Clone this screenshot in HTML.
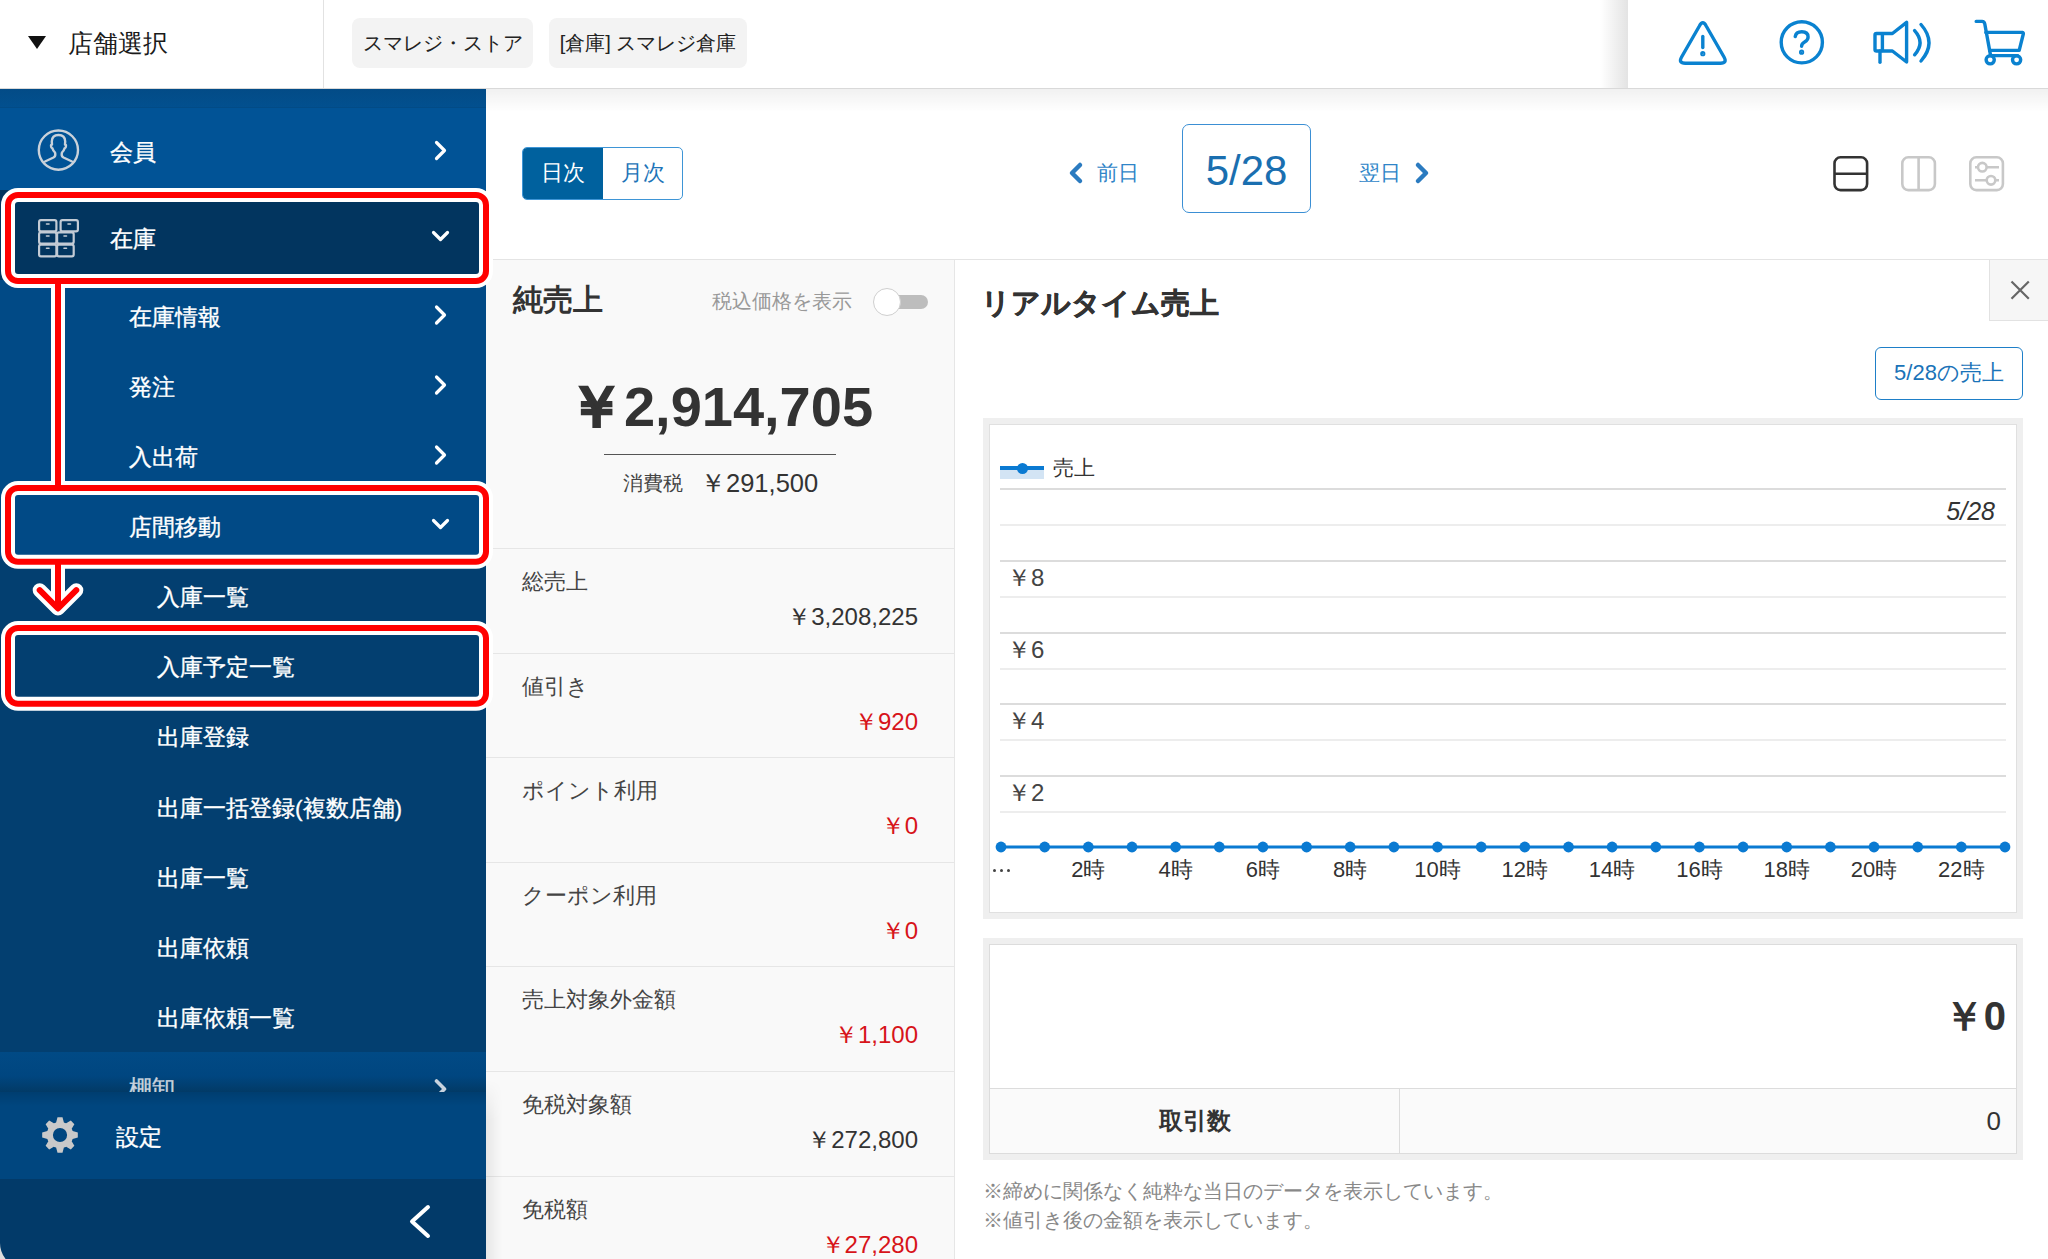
<!DOCTYPE html>
<html lang="ja">
<head>
<meta charset="utf-8">
<style>
*{box-sizing:border-box;margin:0;padding:0}
html,body{width:2048px;height:1259px;overflow:hidden;background:#fff}
body{position:relative;font-family:"Liberation Sans",sans-serif;color:#333}
.a{position:absolute;white-space:nowrap}
/* header */
#hdr{position:absolute;left:0;top:0;width:2048px;height:89px;background:#fff;border-bottom:1px solid #d9d9d9;z-index:5}
.chip{position:absolute;top:18px;height:50px;background:#f3f3f3;border-radius:8px;font-size:20px;line-height:50px;color:#222;white-space:nowrap;text-align:center}
/* sidebar */
#side{position:absolute;left:0;top:88px;width:486px;height:1171px;background:#03406f;overflow:hidden}
.srow{position:absolute;left:0;width:486px;color:#fff;font-size:22px}
.stxt{position:absolute;top:0;line-height:70px}
/* main */
#main{position:absolute;left:486px;top:88px;width:1562px;height:1171px;background:#fff}
</style>
</head>
<body>
<div id="hdr">
  <div class="a" style="left:28px;top:36px;width:0;height:0;border-left:9px solid transparent;border-right:9px solid transparent;border-top:13px solid #111"></div>
  <div class="a" style="left:68px;top:24px;font-size:25.2px;line-height:38px;color:#1a1a1a">店舗選択</div>
  <div class="a" style="left:323px;top:0;width:1px;height:88px;background:#e2e2e2"></div>
  <div class="chip" style="left:352px;width:181px">スマレジ・ストア</div>
  <div class="chip" style="left:549px;width:198px">[倉庫] スマレジ倉庫</div>

  <div class="a" style="left:1600px;top:0;width:28px;height:88px;background:linear-gradient(90deg,rgba(0,0,0,0),rgba(0,0,0,0.11))"></div>
  <svg class="a" style="left:1660px;top:0" width="388" height="88" viewBox="1660 0 388 88" fill="none" stroke="#0a82d0" stroke-width="3.4" stroke-linecap="round" stroke-linejoin="round">
    <path d="M1699.4 26 Q1702.8 19.6 1706.2 26 L1724 57 Q1727.5 63.2 1720.4 63.2 L1685.2 63.2 Q1678.1 63.2 1681.6 57 Z"/>
    <path d="M1702.8 36.5 V47.5"/>
    <circle cx="1702.8" cy="53.7" r="0.9" fill="#0a82d0"/>
    <circle cx="1801.8" cy="42.3" r="20.6"/>
    <path d="M1795.2 36.6 Q1796 31.8 1801.8 31.8 Q1808.1 31.8 1808.1 37 Q1808.1 40 1804.6 42 Q1801.6 43.8 1801.6 46.3"/>
    <circle cx="1801.6" cy="52.2" r="0.9" fill="#0a82d0"/>
    <path d="M1876.5 33.5 H1892.4 L1906.6 22.4 V62 L1892.4 51 H1876.5 Q1875 51 1875 49.5 V35 Q1875 33.5 1876.5 33.5 Z"/>
    <path d="M1882.4 34 V50.6"/>
    <path d="M1880 51 V62.3"/>
    <path d="M1914.6 30.6 Q1925.5 42.6 1914.6 54.8"/>
    <path d="M1921 24.5 Q1937 42.7 1921 61"/>
    <path d="M1976.2 21.4 H1982 Q1984.3 21.5 1984.8 24 L1990.6 55.6 H2017.6"/>
    <path d="M1985.8 32.4 H2022.5 Q2023.6 32.6 2023.3 34 L2019.2 50.4 H1989.6"/>
    <circle cx="1990.2" cy="59.8" r="4.1"/>
    <circle cx="2016.6" cy="59.8" r="4.1"/>
  </svg>
</div>

<div id="side">
  <div class="a" style="left:0;top:0;width:486px;height:20px;background:linear-gradient(#034b86,#02508f)"></div>
  <div class="a" style="left:0;top:19px;width:486px;height:1px;background:#024b86"></div>
  <div class="srow" style="top:20px;height:82px;background:#015396"></div>
  <div class="srow" style="top:102px;height:94px;background:#02355f"></div>
  <div class="srow" style="top:192px;height:280px;background:#014a86"></div>
  <div class="srow" style="top:472px;height:492px;background:#033f70"></div>
  <div class="srow" style="top:964px;height:40px;background:linear-gradient(#014a85 0%,#004680 60%,#023a66 100%)"></div>
  <div class="srow" style="top:1004px;height:87px;background:#00467f"></div>
  <div class="srow" style="top:1091px;height:80px;background:#023a69"></div>
  <div class="a" style="left:110px;top:43.5px;height:40px;line-height:40px;font-size:22.7px;color:#fff;-webkit-text-stroke:0.35px #fff;">会員</div>
  <div class="a" style="left:110px;top:130.5px;height:40px;line-height:40px;font-size:22.7px;color:#fff;-webkit-text-stroke:0.35px #fff;">在庫</div>
  <div class="a" style="left:129px;top:208.5px;height:40px;line-height:40px;font-size:22.7px;color:#fff;-webkit-text-stroke:0.35px #fff;">在庫情報</div>
  <div class="a" style="left:129px;top:278.5px;height:40px;line-height:40px;font-size:22.7px;color:#fff;-webkit-text-stroke:0.35px #fff;">発注</div>
  <div class="a" style="left:129px;top:348.5px;height:40px;line-height:40px;font-size:22.7px;color:#fff;-webkit-text-stroke:0.35px #fff;">入出荷</div>
  <div class="a" style="left:129px;top:418.5px;height:40px;line-height:40px;font-size:22.7px;color:#fff;-webkit-text-stroke:0.35px #fff;">店間移動</div>
  <div class="a" style="left:157px;top:488.5px;height:40px;line-height:40px;font-size:22.7px;color:#fff;-webkit-text-stroke:0.35px #fff;">入庫一覧</div>
  <div class="a" style="left:157px;top:558.5px;height:40px;line-height:40px;font-size:22.7px;color:#fff;-webkit-text-stroke:0.35px #fff;">入庫予定一覧</div>
  <div class="a" style="left:157px;top:628.5px;height:40px;line-height:40px;font-size:22.7px;color:#fff;-webkit-text-stroke:0.35px #fff;">出庫登録</div>
  <div class="a" style="left:157px;top:699.5px;height:40px;line-height:40px;font-size:22.7px;color:#fff;-webkit-text-stroke:0.35px #fff;">出庫一括登録(複数店舗)</div>
  <div class="a" style="left:157px;top:769.5px;height:40px;line-height:40px;font-size:22.7px;color:#fff;-webkit-text-stroke:0.35px #fff;">出庫一覧</div>
  <div class="a" style="left:157px;top:839.5px;height:40px;line-height:40px;font-size:22.7px;color:#fff;-webkit-text-stroke:0.35px #fff;">出庫依頼</div>
  <div class="a" style="left:157px;top:909.5px;height:40px;line-height:40px;font-size:22.7px;color:#fff;-webkit-text-stroke:0.35px #fff;">出庫依頼一覧</div>
  <div class="a" style="left:0;top:964px;width:486px;height:40px;overflow:hidden"><div class="a" style="left:129px;top:16px;line-height:40px;height:40px;font-size:23px;color:#c9d3de;-webkit-text-stroke:0.35px #c9d3de">棚卸</div></div>

  <svg class="a" style="left:0;top:0" width="486" height="1171" viewBox="0 88 486 1171" fill="none" stroke-linecap="round" stroke-linejoin="round">
    <g stroke="#c9d1da" stroke-width="2.4">
      <circle cx="58.4" cy="150.1" r="19.6"/>
      <path d="M45 161.5 L53.5 157.5 Q55.5 156.5 55.3 154 L55 152.5 Q53 150.5 52.5 148.5 Q51 148 51 146 Q51 144.5 52 144.5 L51.8 141.5 Q52 135 58.5 135 Q65 135 65.2 141.5 L65 144.5 Q66 144.5 66 146 Q66 148 64.5 148.5 Q64 150.5 62 152.5 L61.7 154 Q61.5 156.5 63.5 157.5 L72 161.5"/>
    </g>
    <g stroke="#c3cbd5" stroke-width="2.2">
      <rect x="39.1" y="220.1" width="17.3" height="11.2" rx="1.8"/>
      <rect x="60.6" y="220.1" width="17.3" height="11.2" rx="1.8"/>
      <rect x="39.1" y="232.4" width="17.3" height="11.2" rx="1.8"/>
      <rect x="57.1" y="232.4" width="16.6" height="11.2" rx="1.8"/>
      <rect x="39.1" y="244.7" width="17.3" height="11.6" rx="1.8"/>
      <rect x="57.1" y="244.7" width="16.6" height="11.6" rx="1.8"/>
      <path d="M46.5 224 H49 M68 224 H70.5 M46.5 236 H49 M64 236 H66.5 M46.5 248.3 H49 M64 248.3 H66.5" stroke-width="1.6"/>
    </g>
    <g stroke="#fff" stroke-width="3.2">
      <path d="M436.5 142.5 L444.5 150.5 L436.5 158.5"/>
      <path d="M433.5 232.5 L440.5 239.5 L447.5 232.5"/>
      <path d="M436.5 307 L444.5 315 L436.5 323"/>
      <path d="M436.5 377 L444.5 385 L436.5 393"/>
      <path d="M436.5 447 L444.5 455 L436.5 463"/>
      <path d="M433.5 520.5 L440.5 527.5 L447.5 520.5"/>
      <path d="M428 1207 L412 1221.5 L428 1236" stroke-width="4"/>
    </g>
  </svg>
  <div class="a" style="left:0;top:964px;width:486px;height:40px;overflow:hidden"><svg class="a" style="left:430px;top:22px" width="20" height="30" fill="none" stroke="#c9d3de" stroke-width="3.6" stroke-linecap="round" stroke-linejoin="round"><path d="M6.5 7 L14.5 15 L6.5 23"/></svg></div>
  <div class="a" style="left:0;top:1004px;width:486px;height:14px;background:linear-gradient(rgba(0,0,0,0.12),rgba(0,0,0,0))"></div>
  <svg class="a" style="left:40px;top:1027px" width="40" height="40" viewBox="-20 -20 40 40"><path fill="#c9c9c9" fill-rule="evenodd" d="M-3.90 -12.61 L-2.51 -17.82 L2.51 -17.82 L3.90 -12.61 A13.2 13.2 0 0 1 6.16 -11.68 L10.83 -14.38 L14.38 -10.83 L11.68 -6.16 A13.2 13.2 0 0 1 12.61 -3.90 L17.82 -2.51 L17.82 2.51 L12.61 3.90 A13.2 13.2 0 0 1 11.68 6.16 L14.38 10.83 L10.83 14.38 L6.16 11.68 A13.2 13.2 0 0 1 3.90 12.61 L2.51 17.82 L-2.51 17.82 L-3.90 12.61 A13.2 13.2 0 0 1 -6.16 11.68 L-10.83 14.38 L-14.38 10.83 L-11.68 6.16 A13.2 13.2 0 0 1 -12.61 3.90 L-17.82 2.51 L-17.82 -2.51 L-12.61 -3.90 A13.2 13.2 0 0 1 -11.68 -6.16 L-14.38 -10.83 L-10.83 -14.38 L-6.16 -11.68 A13.2 13.2 0 0 1 -3.90 -12.61 Z M 7.1 0 A 7.1 7.1 0 1 0 -7.1 0 A 7.1 7.1 0 1 0 7.1 0 Z"/></svg>
  <div class="a" style="left:116px;top:1028.5px;height:40px;line-height:40px;font-size:22.7px;color:#fff;-webkit-text-stroke:0.35px #fff;">設定</div>
</div>

<div id="mainc" style="position:absolute;left:0;top:0;width:2048px;height:1259px;z-index:1">
  <!-- header shadow over main -->
  <div class="a" style="left:486px;top:88px;width:1562px;height:24px;background:linear-gradient(rgba(0,0,0,0.06),rgba(0,0,0,0))"></div>
  <!-- toolbar -->
  <div class="a" style="left:486px;top:259px;width:1562px;height:1px;background:#e4e4e4"></div>
  <div class="a" style="left:522px;top:147px;width:161px;height:53px;border:1px solid #3e95d6;border-radius:5px;overflow:hidden;background:#fff">
    <div class="a" style="left:0;top:0;width:80px;height:51px;background:#00619e;color:#fff;font-size:21.5px;line-height:51px;text-align:center">日次</div>
    <div class="a" style="left:80px;top:0;width:79px;height:51px;color:#1d74b8;font-size:21.5px;line-height:51px;text-align:center">月次</div>
  </div>
  <svg class="a" style="left:1060px;top:155px" width="30" height="36" fill="none" stroke="#2b7bc0" stroke-width="4.5" stroke-linecap="round" stroke-linejoin="round"><path d="M20 10 L12 18 L20 26"/></svg>
  <div class="a" style="left:1097px;top:153px;font-size:21px;line-height:40px;color:#2f85c8">前日</div>
  <div class="a" style="left:1182px;top:124px;width:129px;height:89px;border:1.5px solid #3b8fd4;border-radius:7px;background:#fff"></div>
  <div class="a" style="left:1182px;top:124px;width:129px;height:89px;font-size:42px;line-height:94px;text-align:center;color:#1a6fb0">5/28</div>
  <div class="a" style="left:1359px;top:153px;font-size:21px;line-height:40px;color:#2f85c8">翌日</div>
  <svg class="a" style="left:1407px;top:155px" width="30" height="36" fill="none" stroke="#2b7bc0" stroke-width="4.5" stroke-linecap="round" stroke-linejoin="round"><path d="M11 10 L19 18 L11 26"/></svg>
  <svg class="a" style="left:1820px;top:140px" width="200" height="70" viewBox="1820 140 200 70" fill="none" stroke-width="2.6">
    <rect x="1834.5" y="157.3" width="32.6" height="32.8" rx="6" stroke="#333"/>
    <path d="M1834.5 173.7 H1867" stroke="#333"/>
    <rect x="1902.3" y="157.3" width="32.6" height="32.8" rx="6" stroke="#c8c8c8"/>
    <path d="M1918.6 157.5 V190" stroke="#c8c8c8"/>
    <rect x="1970.3" y="157.3" width="32.6" height="32.8" rx="6" stroke="#c8c8c8"/>
    <path d="M1975 167.2 H1978 M1986.8 167.2 H1999 M1975 180.3 H1986.5 M1995.5 180.3 H1999" stroke="#c8c8c8"/>
    <circle cx="1982.3" cy="167.2" r="4.3" stroke="#c8c8c8"/>
    <circle cx="1991" cy="180.3" r="4.3" stroke="#c8c8c8"/>
  </svg>

  <!-- left panel -->
  <div class="a" style="left:486px;top:260px;width:469px;height:999px;background:#f9f9f9;border-right:1px solid #e6e6e6"></div>
  <div class="a" style="left:513px;top:280px;font-size:30px;line-height:40px;font-weight:bold;color:#333">純売上</div>
  <div class="a" style="left:712px;top:286px;font-size:19.7px;line-height:30px;color:#999">税込価格を表示</div>
  <div class="a" style="left:880px;top:295px;width:48px;height:14px;border-radius:7px;background:#bdbdbd"></div>
  <div class="a" style="left:873px;top:288px;width:28px;height:28px;border-radius:50%;background:#fff;border:1px solid #cfcfcf"></div>
  <div class="a" style="left:486px;top:370px;width:469px;text-align:center;font-size:56px;line-height:74px;font-weight:bold;color:#333"><span style="-webkit-text-stroke:2px #333">￥</span>2,914,705</div>
  <div class="a" style="left:604px;top:454px;width:232px;height:1px;background:#555"></div>
  <div class="a" style="left:623px;top:468px;font-size:20px;line-height:30px;color:#444">消費税</div>
  <div class="a" style="left:700px;top:465px;font-size:25.5px;line-height:36px;color:#333">￥291,500</div>
  <div class="a" style="left:486px;top:548.0px;width:469px;height:1px;background:#e6e6e6"></div>
  <div class="a" style="left:522px;top:567.0px;font-size:22px;line-height:30px;color:#444">総売上</div>
  <div class="a" style="left:600px;top:599.0px;width:318px;text-align:right;font-size:24px;line-height:36px;color:#333">￥3,208,225</div>
  <div class="a" style="left:486px;top:652.6px;width:469px;height:1px;background:#e6e6e6"></div>
  <div class="a" style="left:522px;top:671.6px;font-size:22px;line-height:30px;color:#444">値引き</div>
  <div class="a" style="left:600px;top:703.6px;width:318px;text-align:right;font-size:24px;line-height:36px;color:#d7141a">￥920</div>
  <div class="a" style="left:486px;top:757.2px;width:469px;height:1px;background:#e6e6e6"></div>
  <div class="a" style="left:522px;top:776.2px;font-size:22px;line-height:30px;color:#444">ポイント利用</div>
  <div class="a" style="left:600px;top:808.2px;width:318px;text-align:right;font-size:24px;line-height:36px;color:#d7141a">￥0</div>
  <div class="a" style="left:486px;top:861.8px;width:469px;height:1px;background:#e6e6e6"></div>
  <div class="a" style="left:522px;top:880.8px;font-size:22px;line-height:30px;color:#444">クーポン利用</div>
  <div class="a" style="left:600px;top:912.8px;width:318px;text-align:right;font-size:24px;line-height:36px;color:#d7141a">￥0</div>
  <div class="a" style="left:486px;top:966.4px;width:469px;height:1px;background:#e6e6e6"></div>
  <div class="a" style="left:522px;top:985.4px;font-size:22px;line-height:30px;color:#444">売上対象外金額</div>
  <div class="a" style="left:600px;top:1017.4px;width:318px;text-align:right;font-size:24px;line-height:36px;color:#d7141a">￥1,100</div>
  <div class="a" style="left:486px;top:1071.0px;width:469px;height:1px;background:#e6e6e6"></div>
  <div class="a" style="left:522px;top:1090.0px;font-size:22px;line-height:30px;color:#444">免税対象額</div>
  <div class="a" style="left:600px;top:1122.0px;width:318px;text-align:right;font-size:24px;line-height:36px;color:#333">￥272,800</div>
  <div class="a" style="left:486px;top:1175.6px;width:469px;height:1px;background:#e6e6e6"></div>
  <div class="a" style="left:522px;top:1194.6px;font-size:22px;line-height:30px;color:#444">免税額</div>
  <div class="a" style="left:600px;top:1226.6px;width:318px;text-align:right;font-size:24px;line-height:36px;color:#d7141a">￥27,280</div>

  <div class="a" style="left:486px;top:1080px;width:16px;height:179px;background:linear-gradient(90deg,rgba(0,0,0,0.07),rgba(0,0,0,0));-webkit-mask-image:linear-gradient(rgba(0,0,0,0),#000 40px)"></div>
  <!-- right panel -->
  <div class="a" style="left:1989px;top:260px;width:59px;height:61px;background:#f6f6f6;border-left:1px solid #e2e2e2;border-bottom:1px solid #e2e2e2"></div>
  <svg class="a" style="left:2005px;top:275px" width="30" height="30" stroke="#666" stroke-width="2.2"><path d="M6.5 6.5 L23.8 23.7 M23.8 6.5 L6.5 23.7"/></svg>
  <div class="a" style="left:981px;top:283px;font-size:29px;line-height:40px;font-weight:bold;color:#333;-webkit-text-stroke:0.5px #333">リアルタイム売上</div>
  <div class="a" style="left:1875px;top:347px;width:148px;height:53px;border:1.5px solid #1e7fc8;border-radius:6px;background:#fff;color:#1a73b8;font-size:22px;line-height:50px;text-align:center">5/28の売上</div>
  <!-- chart -->
  <div class="a" style="left:983px;top:418px;width:1040px;height:501px;background:#efefef"></div>
  <div class="a" style="left:989px;top:424px;width:1028px;height:489px;background:#fff;border:1px solid #e0e0e0"></div>
  <div class="a" style="left:1000px;top:468px;width:44px;height:11px;background:#d3e4f4"></div>
  <div class="a" style="left:1000px;top:466px;width:44px;height:4px;background:#0a7ad2"></div>
  <div class="a" style="left:1017px;top:462.5px;width:11px;height:11px;border-radius:50%;background:#0a7ad2"></div>
  <div class="a" style="left:1053px;top:453px;font-size:21px;line-height:30px;color:#333">売上</div>
  <div class="a" style="left:1000px;top:488.0px;width:1006px;height:2px;background:#dcdcdc"></div>
  <div class="a" style="left:1000px;top:524.0px;width:1006px;height:2px;background:#ededed"></div>
  <div class="a" style="left:1000px;top:560.0px;width:1006px;height:2px;background:#dcdcdc"></div>
  <div class="a" style="left:1000px;top:596.0px;width:1006px;height:2px;background:#ededed"></div>
  <div class="a" style="left:1000px;top:632.0px;width:1006px;height:2px;background:#dcdcdc"></div>
  <div class="a" style="left:1000px;top:667.5px;width:1006px;height:2px;background:#ededed"></div>
  <div class="a" style="left:1000px;top:703.0px;width:1006px;height:2px;background:#dcdcdc"></div>
  <div class="a" style="left:1000px;top:739.0px;width:1006px;height:2px;background:#ededed"></div>
  <div class="a" style="left:1000px;top:775.0px;width:1006px;height:2px;background:#dcdcdc"></div>
  <div class="a" style="left:1000px;top:810.5px;width:1006px;height:2px;background:#ededed"></div>
  <div class="a" style="left:1900px;top:495px;width:95px;text-align:right;font-size:25px;line-height:32px;font-style:italic;color:#333">5/28</div>
  <div class="a" style="left:1007px;top:562px;font-size:24px;line-height:32px;color:#444">￥8</div>
  <div class="a" style="left:1007px;top:634px;font-size:24px;line-height:32px;color:#444">￥6</div>
  <div class="a" style="left:1007px;top:705px;font-size:24px;line-height:32px;color:#444">￥4</div>
  <div class="a" style="left:1007px;top:777px;font-size:24px;line-height:32px;color:#444">￥2</div>
  <svg class="a" style="left:980px;top:830px" width="1040" height="34" viewBox="980 830 1040 34"><path d="M1001 847 H2005" stroke="#0a7ad2" stroke-width="3"/><circle cx="1001.0" cy="847" r="5.4" fill="#0a7ad2"/><circle cx="1044.7" cy="847" r="5.4" fill="#0a7ad2"/><circle cx="1088.3" cy="847" r="5.4" fill="#0a7ad2"/><circle cx="1132.0" cy="847" r="5.4" fill="#0a7ad2"/><circle cx="1175.6" cy="847" r="5.4" fill="#0a7ad2"/><circle cx="1219.3" cy="847" r="5.4" fill="#0a7ad2"/><circle cx="1262.9" cy="847" r="5.4" fill="#0a7ad2"/><circle cx="1306.6" cy="847" r="5.4" fill="#0a7ad2"/><circle cx="1350.2" cy="847" r="5.4" fill="#0a7ad2"/><circle cx="1393.9" cy="847" r="5.4" fill="#0a7ad2"/><circle cx="1437.5" cy="847" r="5.4" fill="#0a7ad2"/><circle cx="1481.2" cy="847" r="5.4" fill="#0a7ad2"/><circle cx="1524.8" cy="847" r="5.4" fill="#0a7ad2"/><circle cx="1568.5" cy="847" r="5.4" fill="#0a7ad2"/><circle cx="1612.1" cy="847" r="5.4" fill="#0a7ad2"/><circle cx="1655.8" cy="847" r="5.4" fill="#0a7ad2"/><circle cx="1699.4" cy="847" r="5.4" fill="#0a7ad2"/><circle cx="1743.1" cy="847" r="5.4" fill="#0a7ad2"/><circle cx="1786.7" cy="847" r="5.4" fill="#0a7ad2"/><circle cx="1830.4" cy="847" r="5.4" fill="#0a7ad2"/><circle cx="1874.0" cy="847" r="5.4" fill="#0a7ad2"/><circle cx="1917.7" cy="847" r="5.4" fill="#0a7ad2"/><circle cx="1961.3" cy="847" r="5.4" fill="#0a7ad2"/><circle cx="2005.0" cy="847" r="5.4" fill="#0a7ad2"/></svg>
  <div class="a" style="left:993px;top:869px;width:3px;height:3px;border-radius:50%;background:#444"></div><div class="a" style="left:1000px;top:869px;width:3px;height:3px;border-radius:50%;background:#444"></div><div class="a" style="left:1007px;top:869px;width:3px;height:3px;border-radius:50%;background:#444"></div>
  <div class="a" style="left:1048.3px;top:855px;width:80px;text-align:center;font-size:22px;line-height:30px;color:#333">2時</div>
  <div class="a" style="left:1135.6px;top:855px;width:80px;text-align:center;font-size:22px;line-height:30px;color:#333">4時</div>
  <div class="a" style="left:1222.9px;top:855px;width:80px;text-align:center;font-size:22px;line-height:30px;color:#333">6時</div>
  <div class="a" style="left:1310.2px;top:855px;width:80px;text-align:center;font-size:22px;line-height:30px;color:#333">8時</div>
  <div class="a" style="left:1397.5px;top:855px;width:80px;text-align:center;font-size:22px;line-height:30px;color:#333">10時</div>
  <div class="a" style="left:1484.8px;top:855px;width:80px;text-align:center;font-size:22px;line-height:30px;color:#333">12時</div>
  <div class="a" style="left:1572.1px;top:855px;width:80px;text-align:center;font-size:22px;line-height:30px;color:#333">14時</div>
  <div class="a" style="left:1659.4px;top:855px;width:80px;text-align:center;font-size:22px;line-height:30px;color:#333">16時</div>
  <div class="a" style="left:1746.7px;top:855px;width:80px;text-align:center;font-size:22px;line-height:30px;color:#333">18時</div>
  <div class="a" style="left:1834.0px;top:855px;width:80px;text-align:center;font-size:22px;line-height:30px;color:#333">20時</div>
  <div class="a" style="left:1921.3px;top:855px;width:80px;text-align:center;font-size:22px;line-height:30px;color:#333">22時</div>
  <!-- summary -->
  <div class="a" style="left:983px;top:938px;width:1040px;height:222px;background:#efefef"></div>
  <div class="a" style="left:989px;top:944px;width:1028px;height:210px;background:#fff;border:1px solid #dcdcdc"></div>
  <div class="a" style="left:990px;top:1088px;width:1026px;height:65px;background:#fafafa;border-top:1px solid #dcdcdc"></div>
  <div class="a" style="left:1399px;top:1089px;width:1px;height:64px;background:#dcdcdc"></div>
  <div class="a" style="left:990px;top:1088px;width:409px;height:65px;text-align:center;font-size:24px;line-height:65px;font-weight:bold;color:#333">取引数</div>
  <div class="a" style="left:1900px;top:1101px;width:101px;text-align:right;font-size:26px;line-height:40px;color:#333">0</div>
  <div class="a" style="left:1800px;top:990px;width:206px;text-align:right;font-size:40px;line-height:52px;font-weight:bold;color:#333">￥0</div>
  <div class="a" style="left:983px;top:1177px;font-size:20px;line-height:29px;color:#888">※締めに関係なく純粋な当日のデータを表示しています。<br>※値引き後の金額を表示しています。</div>
</div>



<svg id="ann" style="position:absolute;left:0;top:0;z-index:20" width="2048" height="1259" fill="none" stroke-linecap="butt" stroke-linejoin="round">
  <g stroke="#fff" stroke-width="14">
    <rect x="8" y="195" width="478" height="86" rx="10"/>
    <rect x="8" y="488" width="478" height="73.7" rx="10"/>
    <rect x="8" y="628" width="478" height="75.7" rx="10"/>
    <path d="M58 281 V488 M58 561.7 V606"/>
    <path d="M39.7 590.2 L58 608.5 L76.3 590.2" stroke-linecap="round"/>
  </g>
  <g stroke="#f00" stroke-width="6">
    <rect x="8" y="195" width="478" height="86" rx="10"/>
    <rect x="8" y="488" width="478" height="73.7" rx="10"/>
    <rect x="8" y="628" width="478" height="75.7" rx="10"/>
    <path d="M58 281 V488 M58 561.7 V606"/>
    <path d="M39.7 590.2 L58 608.5 L76.3 590.2" stroke-linecap="round"/>
  </g>
</svg>
<svg style="position:absolute;left:0;top:1239px;z-index:21" width="20" height="20" viewBox="0 1239 20 20"><path d="M0 1243 A25.7 25.7 0 0 0 5.6 1259 L0 1259 Z" fill="#dcdcdc"/></svg>
</body>
</html>
